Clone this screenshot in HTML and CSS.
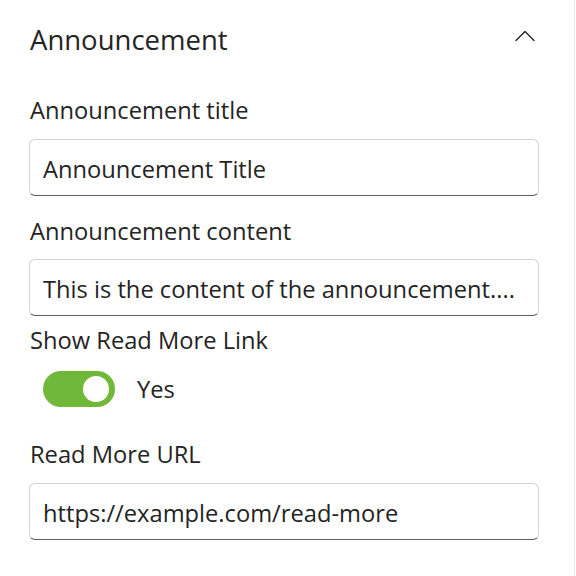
FILE: index.html
```html
<!DOCTYPE html>
<html lang="en">
<head>
<meta charset="utf-8">
<title>Announcement</title>
<link rel="stylesheet" href="styles.css">
</head>
<body>
<div class="pane">
  <div class="group-header">
    <span class="group-title">Announcement</span>
    <svg class="chevron" width="24" height="24" viewBox="0 0 24 24" aria-hidden="true">
      <path d="M3 12.5 L12 3.5 L21 12.5" fill="none" stroke="#242424" stroke-width="1.4" stroke-linecap="round" stroke-linejoin="round"/>
    </svg>
  </div>

  <div class="field field-first">
    <label class="label" for="t1">Announcement title</label>
    <input class="input" id="t1" type="text" value="Announcement Title">
  </div>

  <div class="field field-second">
    <label class="label" for="t2">Announcement content</label>
    <input class="input" id="t2" type="text" value="This is the content of the announcement....">
  </div>

  <div class="field field-switch">
    <span class="label">Show Read More Link</span>
    <div class="switch">
      <span class="track"><span class="thumb"></span></span>
      <span class="switch-label">Yes</span>
    </div>
  </div>

  <div class="field field-url">
    <label class="label" for="t3">Read More URL</label>
    <input class="input" id="t3" type="text" value="https://example.com/read-more">
  </div>
</div>
</body>
</html>
```

FILE: styles.css
```css
html, body {
  margin: 0;
  padding: 0;
  background: #ffffff;
}

body {
  font-family: "Open Sans", "Noto Sans", sans-serif;
  color: #242424;
}

.pane {
  width: 575px;
  min-height: 576px;
  box-sizing: border-box;
  padding: 20px 35px 0 29px;
  border-right: 1px solid #e6e6e6;
  background: #ffffff;
}

.group-header {
  display: flex;
  align-items: center;
  justify-content: space-between;
  height: 40px;
  padding-left: 1px;
}

.group-title {
  font-size: 27.5px;
  line-height: 40px;
  font-weight: 400;
}

.chevron {
  display: block;
  margin-right: 2px;
}

.field {
  display: flex;
  flex-direction: column;
}

.field-first { margin-top: 34px; }
.field-second { margin-top: 19px; }
.field-switch { margin-top: 8px; }
.field-url { margin-top: 31px; }

.label {
  font-size: 23.7px;
  line-height: 32px;
  padding-left: 1px;
}

.input {
  margin-top: 12px;
  height: 57px;
  box-sizing: border-box;
  width: 100%;
  border: 1px solid #d1d1d1;
  border-bottom-color: #616161;
  border-radius: 6px;
  padding: 2px 13px 0 13px;
  font-family: "Open Sans", "Noto Sans", sans-serif;
  font-size: 23.7px;
  color: #242424;
  background: #ffffff;
  text-overflow: ellipsis;
  outline: none;
}

.field-first .input { margin-top: 13px; }
.field-url .input { margin-top: 13px; }

.switch {
  display: flex;
  align-items: center;
  margin-top: 15px;
  margin-left: 14px;
}

.track {
  display: flex;
  align-items: center;
  justify-content: flex-end;
  width: 72px;
  height: 36px;
  box-sizing: border-box;
  padding-right: 6px;
  border-radius: 18px;
  background: #70b83a;
}

.thumb {
  width: 26px;
  height: 26px;
  border-radius: 50%;
  background: #ffffff;
}

.switch-label {
  margin-left: 22px;
  font-size: 23.7px;
  line-height: 32px;
}
```
